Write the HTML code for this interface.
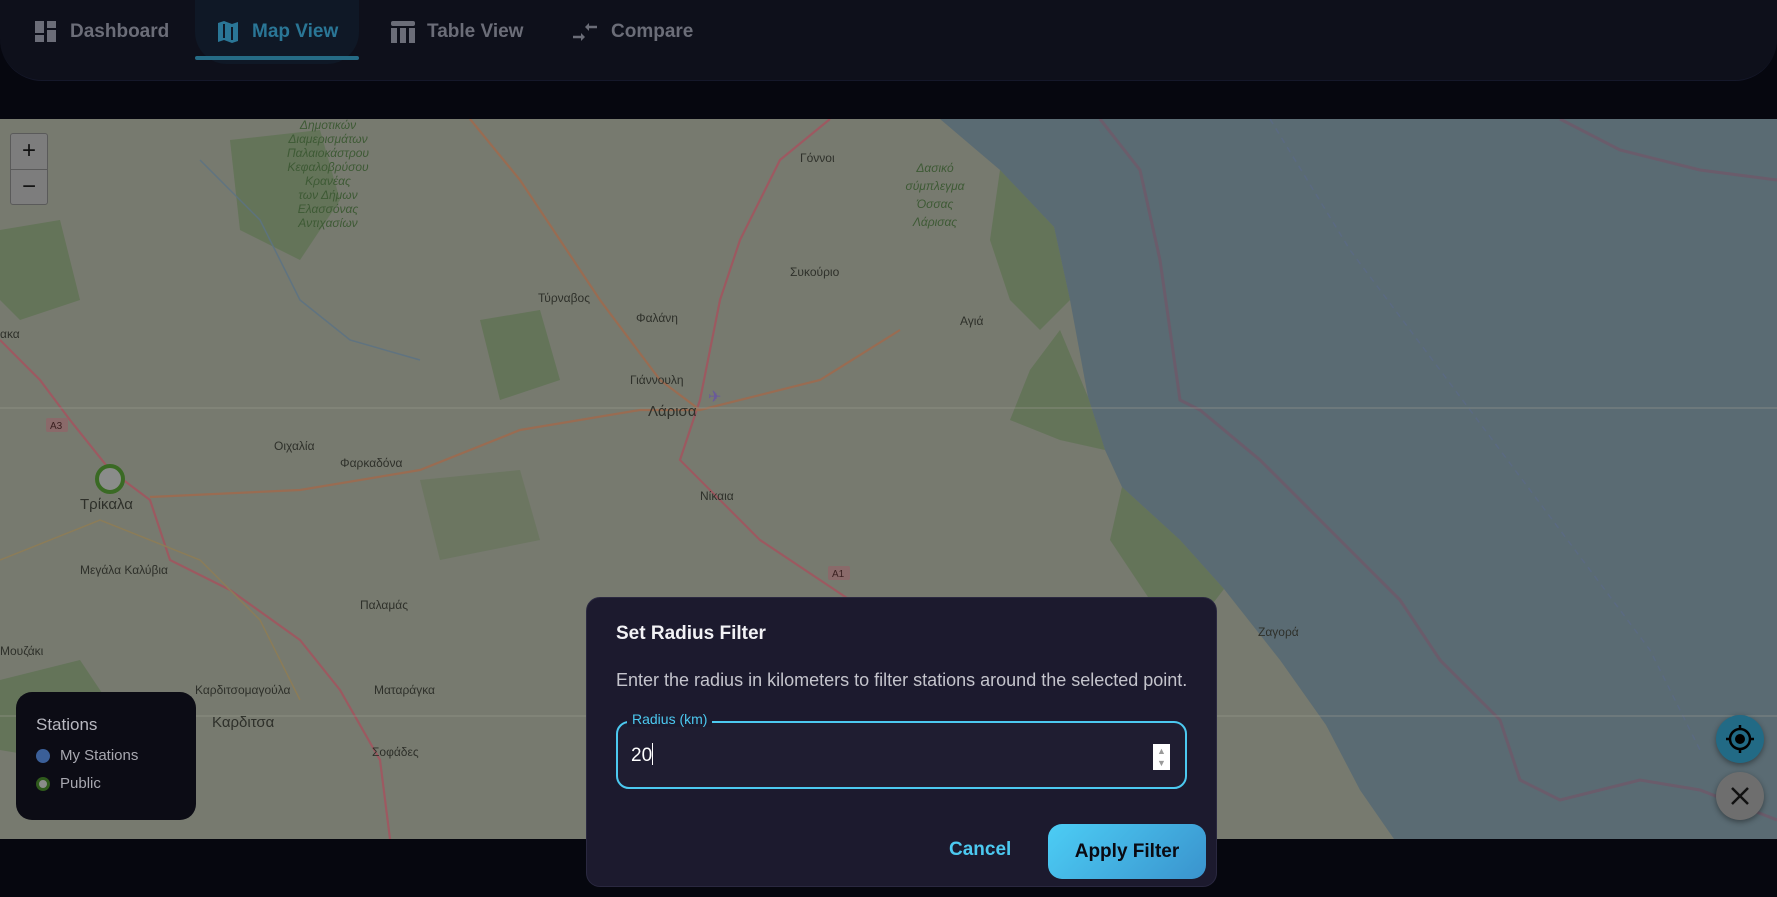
<!DOCTYPE html>
<html><head><meta charset="utf-8"><style>
*{margin:0;padding:0;box-sizing:border-box}
body{width:1777px;height:897px;background:#06070f;font-family:"Liberation Sans",sans-serif;position:relative;overflow:hidden}
.nav{position:absolute;left:0;top:0;width:1777px;height:81px;background:#0e101b;border-radius:0 0 42px 42px;border-bottom:1px solid #15182a}
.ni{position:absolute;top:19px;height:26px;display:flex;align-items:center;font-size:19px;font-weight:bold;color:#6b6d78}
.pill{position:absolute;left:195px;top:0;width:164px;height:64px;background:#0f1826;border-radius:0 0 32px 32px}
.ul{position:absolute;left:195px;top:56px;width:164px;height:4px;background:#256b85;border-radius:2px}
.map{position:absolute;left:0;top:119px;width:1777px;height:720px;overflow:hidden}
.zoom{position:absolute;left:10px;top:133px;width:38px;height:72px;background:#7d7d7d;border:1px solid #5a5a5a;border-radius:3px}
.zoom div{height:36px;text-align:center;font-size:24px;line-height:34px;color:#111}
.legend{position:absolute;left:16px;top:692px;width:180px;height:128px;background:#0c0c15;border-radius:16px}
.dialog{position:absolute;left:586px;top:597px;width:631px;height:290px;background:#1c1a2e;border-radius:14px;border:1px solid #2a2840}
</style></head><body>
<div class="nav">
<div class="pill"></div><div class="ul"></div>
<div class="ni" style="left:35px"><svg width="22" height="22" viewBox="0 0 22 22"><rect x="0" y="0" width="9" height="12" fill="#6b6d78"/><rect x="12" y="0" width="9" height="7" fill="#6b6d78"/><rect x="0" y="14" width="9" height="7" fill="#6b6d78"/><rect x="12" y="9" width="9" height="12" fill="#6b6d78"/></svg><span style="margin-left:13px">Dashboard</span></div>
<div class="ni" style="left:217px;color:#2a7696"><svg width="22" height="24" viewBox="0 0 22 24"><path d="M1 3 L7 1 L15 4 L21 2 L21 21 L15 23 L7 20 L1 22 Z" fill="#2a7696"/><path d="M7 4 L7 18 M15 7 L15 20" stroke="#0f1826" stroke-width="2"/></svg><span style="margin-left:13px">Map View</span></div>
<div class="ni" style="left:391px"><svg width="24" height="22" viewBox="0 0 24 22"><rect x="0" y="0" width="24" height="5" rx="2" fill="#6b6d78"/><rect x="0" y="7" width="6" height="15" fill="#6b6d78"/><rect x="9" y="7" width="6" height="15" fill="#6b6d78"/><rect x="18" y="7" width="6" height="15" fill="#6b6d78"/></svg><span style="margin-left:12px">Table View</span></div>
<div class="ni" style="left:572px"><svg width="26" height="22" viewBox="0 0 26 22"><path d="M1 16 H11" stroke="#6b6d78" stroke-width="2.5"/><path d="M9 12 L13 16 L9 20 Z" fill="#6b6d78"/><path d="M25 6 H15" stroke="#6b6d78" stroke-width="2.5"/><path d="M17 2 L13 6 L17 10 Z" fill="#6b6d78"/></svg><span style="margin-left:13px">Compare</span></div>
</div>

<div class="map">
<svg width="1777" height="720" viewBox="0 119 1777 720">
<rect x="0" y="119" width="1777" height="720" fill="#777a6f"/>
<path d="M940 119 L1000 170 L1054 227 L1070 300 L1088 397 L1105 450 L1122 487 L1180 540 L1224 589 L1280 660 L1326 725 L1360 790 L1394 839 L1777 839 L1777 119 Z" fill="#5a6b73"/>
<g fill="#627457" opacity="0.9">
<path d="M1000 170 L1054 227 L1070 300 L1040 330 L1010 300 L990 240 Z"/>
<path d="M1060 330 L1088 397 L1105 450 L1060 440 L1010 420 L1030 370 Z"/>
<path d="M1122 487 L1180 540 L1224 589 L1200 620 L1150 600 L1110 540 Z"/>
<path d="M230 140 L320 130 L340 200 L300 260 L240 230 Z"/>
<path d="M480 320 L540 310 L560 380 L500 400 Z"/>
<path d="M0 230 L60 220 L80 300 L20 320 L0 300 Z"/>
<path d="M420 480 L520 470 L540 540 L440 560 Z" opacity="0.6"/>
<path d="M0 680 L80 660 L120 720 L60 760 L0 750 Z"/>
<path d="M880 720 L960 700 L990 780 L900 800 Z" opacity="0.6"/>
</g>
<g fill="none" stroke-width="2.2" opacity="0.85">
<path d="M0 340 L40 380 L70 420 L110 470 L150 500 L170 560 L230 590 L300 640 L340 690 L380 760 L390 839" stroke="#a3545f"/>
<path d="M830 119 L780 160 L740 240 L720 300 L700 400 L680 460 L720 500 L760 540 L820 580 L880 620 L920 700" stroke="#a3545f"/>
<path d="M150 497 L300 490 L420 470 L520 430 L640 410 L700 410 L820 380 L900 330" stroke="#9f6a4e"/>
<path d="M470 119 L520 180 L560 240 L600 300 L660 380 L700 410" stroke="#9f6a4e"/>
<path d="M1100 119 L1140 170 L1160 260 L1180 400 L1200 410 L1260 460 L1320 520 L1360 560 L1400 600 L1440 660 L1500 720 L1520 780 L1560 800 L1640 780 L1700 790 L1777 820" stroke="#6e5a6a" stroke-width="3"/>
<path d="M1560 119 L1620 150 L1700 170 L1777 180" stroke="#6e5a6a" stroke-width="3"/>
<path d="M1270 119 L1350 250 L1500 450 L1650 650 L1700 750" stroke="#5b6a84" stroke-width="1.5" stroke-dasharray="6 5"/>
<path d="M0 560 L100 520 L200 560 L260 620 L300 700" stroke="#8f7d55" stroke-width="1.5"/>
<path d="M200 160 L260 220 L300 300 L350 340 L420 360" stroke="#5c7384" stroke-width="1.5"/>
</g>
<g stroke="#9a9a90" stroke-width="1" opacity="0.6"><line x1="0" y1="408" x2="1777" y2="408"/><line x1="0" y1="716" x2="1777" y2="716"/></g>
<g font-family="Liberation Sans, DejaVu Sans, sans-serif" font-size="12" fill="#2e302a">
<text x="800" y="162">Γόννοι</text><text x="790" y="276">Συκούριο</text><text x="538" y="302">Τύρναβος</text><text x="636" y="322">Φαλάνη</text>
<text x="630" y="384">Γιάννουλη</text><text x="648" y="416" font-size="15">Λάρισα</text><text x="700" y="500">Νίκαια</text>
<text x="960" y="325">Αγιά</text><text x="274" y="450">Οιχαλία</text><text x="340" y="467">Φαρκαδόνα</text>
<text x="80" y="509" font-size="15">Τρίκαλα</text><text x="80" y="574">Μεγάλα Καλύβια</text><text x="360" y="609">Παλαμάς</text>
<text x="195" y="694">Καρδιτσομαγούλα</text><text x="212" y="727" font-size="15">Καρδιτσα</text><text x="374" y="694">Ματαράγκα</text>
<text x="372" y="756">Σοφάδες</text><text x="0" y="655">Μουζάκι</text><text x="0" y="338">ακα</text><text x="1258" y="636">Ζαγορά</text>
</g>
<g font-family="Liberation Sans, sans-serif" font-size="12" font-style="italic" fill="#3e5a35" text-anchor="middle">
<text x="935" y="172">Δασικό</text><text x="935" y="190">σύμπλεγμα</text><text x="935" y="208">Όσσας</text><text x="935" y="226">Λάρισας</text>
<text x="328" y="129">Δημοτικών</text><text x="328" y="143">Διαμερισμάτων</text><text x="328" y="157">Παλαιοκάστρου</text><text x="328" y="171">Κεφαλοβρύσου</text><text x="328" y="185">Κρανέας</text><text x="328" y="199">των Δήμων</text><text x="328" y="213">Ελασσόνας</text><text x="328" y="227">Αντιχασίων</text>
</g>
<rect x="46" y="418" width="22" height="14" rx="2" fill="#8a6a6a"/><text x="50" y="429" font-size="10" fill="#3a2020" font-family="Liberation Sans">A3</text>
<rect x="828" y="566" width="22" height="14" rx="2" fill="#8a6a6a"/><text x="832" y="577" font-size="10" fill="#3a2020" font-family="Liberation Sans">A1</text>
<circle cx="110" cy="479" r="13" fill="#8a8c8a" stroke="#3a6a24" stroke-width="4"/>
<text x="708" y="402" font-size="16" fill="#6a5a9a">✈</text>
</svg>
<div class="zoom" style="top:14px"><div style="border-bottom:1px solid #5a5a5a">+</div><div>−</div></div>
</div>

<div class="legend">
<div style="position:absolute;left:20px;top:23px;font-size:17px;color:#b8b8c0">Stations</div>
<div style="position:absolute;left:20px;top:57px;width:14px;height:14px;border-radius:50%;background:#3b5f98"></div>
<div style="position:absolute;left:44px;top:55px;font-size:15px;color:#a8a8b0">My Stations</div>
<div style="position:absolute;left:20px;top:85px;width:14px;height:14px;border-radius:50%;background:#8a8c8a;border:3px solid #2f5a1c"></div>
<div style="position:absolute;left:44px;top:83px;font-size:15px;color:#a8a8b0">Public</div>
</div>

<div style="position:absolute;left:1716px;top:715px;width:48px;height:48px;border-radius:50%;background:#226a85;box-shadow:0 2px 6px rgba(0,0,0,.4)">
<svg width="48" height="48" viewBox="0 0 48 48"><circle cx="24" cy="24" r="10" fill="none" stroke="#000" stroke-width="2.5"/><circle cx="24" cy="24" r="5" fill="#000"/><path d="M24 10 V14 M24 34 V38 M10 24 H14 M34 24 H38" stroke="#000" stroke-width="2.5"/></svg></div>
<div style="position:absolute;left:1716px;top:772px;width:48px;height:48px;border-radius:50%;background:#6e6e6e;box-shadow:0 2px 6px rgba(0,0,0,.4)">
<svg width="48" height="48" viewBox="0 0 48 48"><path d="M16 16 L32 32 M32 16 L16 32" stroke="#111" stroke-width="2.5"/></svg></div>

<div class="dialog">
<div style="position:absolute;left:29px;top:25px;font-size:19px;font-weight:bold;color:#f2f2f5">Set Radius Filter</div>
<div style="position:absolute;left:29px;top:72px;font-size:18px;color:#c4c4cc">Enter the radius in kilometers to filter stations around the selected point.</div>
<div style="position:absolute;left:29px;top:123px;width:571px;height:68px;border:2px solid #4cc9f0;border-radius:13px;background:#1f1d31"></div>
<div style="position:absolute;left:40px;top:113px;padding:0 5px;background:#1c1a2e;font-size:14px;color:#4cc9f0">Radius (km)</div>
<div style="position:absolute;left:44px;top:145px;font-size:19px;color:#fff">20<span style="display:inline-block;width:1px;height:22px;background:#fff;vertical-align:-4px"></span></div>
<div style="position:absolute;left:566px;top:146px;width:17px;height:26px;background:#fff;color:#999;font-size:9px;text-align:center;line-height:12px;padding-top:1px">▲<br>▼</div>
<div style="position:absolute;left:362px;top:241px;font-size:19px;font-weight:bold;color:#4cc9f0">Cancel</div>
<div style="position:absolute;left:461px;top:226px;width:158px;height:55px;border-radius:14px;background:linear-gradient(135deg,#4ccdf5,#3a93cd);font-size:19px;font-weight:bold;color:#0a0a12;text-align:center;line-height:55px">Apply Filter</div>
</div>
</body></html>
